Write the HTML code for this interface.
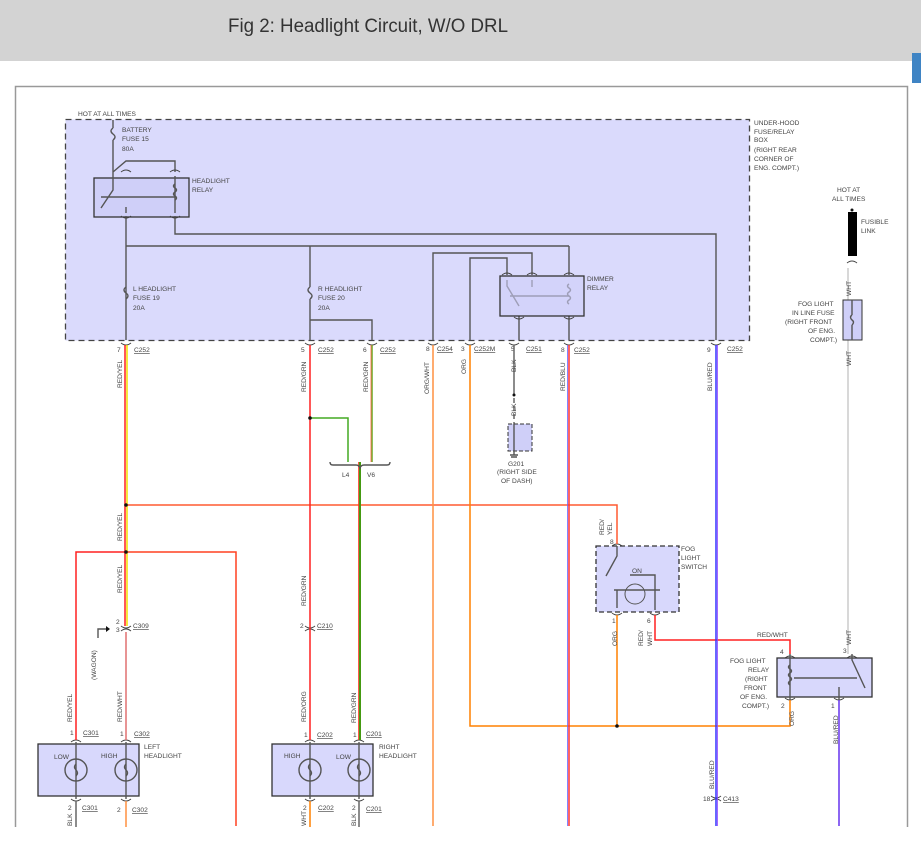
<!DOCTYPE html>
<html><head><meta charset="utf-8"><style>
html,body{margin:0;padding:0;background:#fff;width:921px;height:847px;overflow:hidden}
svg{display:block}
text{font-family:"Liberation Sans",sans-serif;font-size:6.6px;fill:#444}
.g{stroke:#555;stroke-width:1.4;fill:none}
.c{stroke:#444;stroke-width:1;fill:none}
.u{text-decoration:underline}
</style></head><body>
<svg width="921" height="847" viewBox="0 0 921 847" xmlns="http://www.w3.org/2000/svg">
<rect x="0" y="0" width="921" height="61" fill="#d3d3d3"/>
<text x="228" y="32" style="font-size:19px;fill:#333" textLength="280" lengthAdjust="spacingAndGlyphs">Fig 2: Headlight Circuit, W/O DRL</text>
<rect x="912" y="53" width="9" height="30" fill="#3f84c4"/>
<path d="M15.5 827 V86.5 H907.5 V827" stroke="#999" stroke-width="1.5" fill="none"/>
<rect x="65.5" y="119.5" width="684" height="221" fill="#dadafc" stroke="#444" stroke-width="1.3" stroke-dasharray="6,4"/>
<text x="78" y="116">HOT AT ALL TIMES</text>
<text x="754" y="125">UNDER-HOOD</text><text x="754" y="134">FUSE/RELAY</text><text x="754" y="142">BOX</text><text x="754" y="152">(RIGHT REAR</text><text x="754" y="161">CORNER OF</text><text x="754" y="170">ENG. COMPT.)</text>
<path class="g" d="M113 120 V128 M113 140 V172 M113 128 q-4 3 0 6 q4 3 0 6"/>
<text x="122" y="132">BATTERY</text><text x="122" y="141">FUSE 15</text><text x="122" y="151">80A</text>
<rect x="94" y="178" width="95" height="39" fill="#cfcff8" stroke="#333" stroke-width="1.3"/>
<path class="g" d="M113 172 L126 161 H175 V172 M113 172 V190 L101 208 M101 197 H175 M175 176 V213 M126 216 V340 M126 246 H569 M175 216 V234 H716 V340 M126 207 V213"/>
<path class="g" d="M175 184 q-3 2 0 4 q3 2 0 4 q-3 2 0 4 q3 2 0 4"/>
<text x="192" y="183">HEADLIGHT</text><text x="192" y="192">RELAY</text>
<path class="g" d="M126 287 q-4 3 0 6 q4 3 0 6"/>
<text x="133" y="291">L HEADLIGHT</text><text x="133" y="300">FUSE 19</text><text x="133" y="310">20A</text>
<path class="g" d="M310 246 V287 M310 299 V340 M310 287 q-4 3 0 6 q4 3 0 6 M310 320 H372 V340"/>
<text x="318" y="291">R HEADLIGHT</text><text x="318" y="300">FUSE 20</text><text x="318" y="310">20A</text>
<path class="g" d="M433 340 V253 H532 V275 M470 340 V258 H507 V275 M569 246 V275 M519 316 V340 M569 316 V340 M507 280 V286 L519 306 M532 280 V287 M510 296 H569"/>
<path class="g" d="M569 284 q-3 2 0 4 q3 2 0 4 q-3 2 0 4 q3 2 0 4 q-3 2 0 4"/>
<rect x="500" y="276" width="84" height="40" fill="#cfcff8" stroke="#333" stroke-width="1.3" fill-opacity="0.6"/>
<text x="587" y="281">DIMMER</text><text x="587" y="290">RELAY</text>
<!-- connector cups -->
<g class="c">
<path d="M121 343 q5 4 10 0 M305 343 q5 4 10 0 M367 343 q5 4 10 0 M428 343 q5 4 10 0 M465 343 q5 4 10 0 M509 343 q5 4 10 0 M564 343 q5 4 10 0 M711 343 q5 4 10 0"/>
<path d="M121 216 q5 4 10 0 M170 216 q5 4 10 0 M121 172 q5 -4 10 0 M170 172 q5 -4 10 0"/>
<path d="M502 275 q5 -4 10 0 M527 275 q5 -4 10 0 M564 275 q5 -4 10 0 M514 317 q5 4 10 0 M564 317 q5 4 10 0"/>
<path d="M121 626 q5 4 10 0 M121 631 q5 -4 10 0 M305 626 q5 4 10 0 M305 631 q5 -4 10 0 M711 796 q5 4 10 0 M711 801 q5 -4 10 0"/>
<path d="M71 742 q5 -4 10 0 M121 742 q5 -4 10 0 M305 742 q5 -4 10 0 M354 742 q5 -4 10 0"/>
<path d="M71 799 q5 4 10 0 M121 799 q5 4 10 0 M305 799 q5 4 10 0 M354 799 q5 4 10 0"/>
<path d="M612 546 q5 -4 10 0 M612 613 q5 4 10 0 M650 613 q5 4 10 0 M785 658 q5 -4 10 0 M847 658 q5 -4 10 0 M785 698 q5 4 10 0 M834 698 q5 4 10 0 M847 263 q5 -4 10 0"/>
</g>
<g>
<text x="117" y="352">7</text><text x="134" y="352" class="u">C252</text>
<text x="301" y="352">5</text><text x="318" y="352" class="u">C252</text>
<text x="363" y="352">6</text><text x="380" y="352" class="u">C252</text>
<text x="426" y="351">8</text><text x="437" y="351" class="u">C254</text>
<text x="461" y="351">3</text><text x="474" y="351" class="u">C252M</text>
<text x="511" y="351">5</text><text x="526" y="351" class="u">C251</text>
<text x="561" y="352">8</text><text x="574" y="352" class="u">C252</text>
<text x="707" y="352">9</text><text x="727" y="351" class="u">C252</text>
</g>
<g fill="none" stroke-width="1.5">
<path d="M125 345 V552" stroke="#ff2020"/><path d="M127 345 V626" stroke="#f0e000"/>
<path d="M125 552 V626" stroke="#ff2020"/>
<path d="M126 632 V740" stroke="#e07070"/>
<path d="M126 505 H617 V544" stroke="#ff5a30"/>
<path d="M126 552 H76 V740" stroke="#ff2020"/>
<path d="M126 552 H236 V826" stroke="#ff4020"/>
<path d="M310 345 V740" stroke="#ff2020"/>
<path d="M310 418 H348 V462" stroke="#44aa22"/>
<path d="M372 345 V462" stroke="#66aa22"/><path d="M371 345 V462" stroke="#ff6040" stroke-width="0.8"/>
<path d="M360 462 V740" stroke="#449911" stroke-width="2"/><path d="M358.5 462 V740" stroke="#ff3020" stroke-width="0.8"/>
<path d="M433 345 V826" stroke="#ff9040"/>
<path d="M470 345 V726 H790 V700" stroke="#ff8000"/>
<path d="M617 615 V726" stroke="#ff8000"/>
<path d="M655 615 V640 H790 V654" stroke="#ff2020"/>
<path d="M569 345 V826" stroke="#ff3030"/><path d="M567.5 345 V826" stroke="#6666ff" stroke-width="0.8"/>
<path d="M716 345 V826" stroke="#3333ff"/><path d="M717.5 345 V826" stroke="#9040ff" stroke-width="0.8"/>
<path d="M839 700 V826" stroke="#6633ee"/>
<path d="M848 268 V654" stroke="#cccccc"/>
<path d="M310 827 V801" stroke="#ff8000"/><path d="M126 801 V827" stroke="#ff9040"/>
<path d="M76 801 V827 M359 801 V827" stroke="#666"/>
<path d="M514 345 V395" stroke="#666"/><path d="M514 398 V424" stroke="#666" stroke-dasharray="5,3"/>
</g>
<g fill="#111"><circle cx="126" cy="505" r="1.8"/><circle cx="126" cy="552" r="1.8"/><circle cx="310" cy="418" r="1.8"/><circle cx="617" cy="726" r="1.8"/><circle cx="514" cy="395" r="1.5"/></g>
<g>
<text transform="translate(122,388) rotate(-90)">RED/YEL</text>
<text transform="translate(306,392) rotate(-90)">RED/GRN</text>
<text transform="translate(368,392) rotate(-90)">RED/GRN</text>
<text transform="translate(429,394) rotate(-90)">ORG/WHT</text>
<text transform="translate(466,374) rotate(-90)">ORG</text>
<text transform="translate(516,372) rotate(-90)">BLK</text>
<text transform="translate(516,416) rotate(-90)">BLK</text>
<text transform="translate(565,391) rotate(-90)">RED/BLU</text>
<text transform="translate(712,391) rotate(-90)">BLU/RED</text>
<text transform="translate(122,541) rotate(-90)">RED/YEL</text>
<text transform="translate(122,593) rotate(-90)">RED/YEL</text>
<text transform="translate(306,606) rotate(-90)">RED/GRN</text>
<text transform="translate(96,680) rotate(-90)">(WAGON)</text>
<text transform="translate(72,722) rotate(-90)">RED/YEL</text>
<text transform="translate(122,722) rotate(-90)">RED/WHT</text>
<text transform="translate(306,722) rotate(-90)">RED/ORG</text>
<text transform="translate(356,723) rotate(-90)">RED/GRN</text>
<text transform="translate(604,535) rotate(-90)">RED/</text><text transform="translate(612,535) rotate(-90)">YEL</text>
<text transform="translate(617,646) rotate(-90)">ORG</text>
<text transform="translate(643,646) rotate(-90)">RED/</text><text transform="translate(652,646) rotate(-90)">WHT</text>
<text transform="translate(851,296) rotate(-90)">WHT</text>
<text transform="translate(851,366) rotate(-90)">WHT</text>
<text transform="translate(851,645) rotate(-90)">WHT</text>
<text transform="translate(794,726) rotate(-90)">ORG</text>
<text transform="translate(838,744) rotate(-90)">BLU/RED</text>
<text transform="translate(714,789) rotate(-90)">BLU/RED</text>
<text transform="translate(72,826) rotate(-90)">BLK</text>
<text transform="translate(306,826) rotate(-90)">WHT</text>
<text transform="translate(356,826) rotate(-90)">BLK</text>
</g>
<path class="g" d="M330 462 q0 3 3 3 H356 q3 0 4 3 q1 -3 4 -3 H387 q3 0 3 -3" stroke-width="1"/>
<text x="342" y="477">L4</text><text x="367" y="477">V6</text>
<rect x="508" y="424" width="24" height="27" fill="#cfcff8" stroke="#333" stroke-dasharray="4,2"/>
<path class="g" d="M514 424 V455 M510 455 H518 M511 457 H517" stroke-width="1"/>
<text x="508" y="466">G201</text><text x="497" y="474">(RIGHT SIDE</text><text x="501" y="483">OF DASH)</text>
<text x="837" y="192">HOT AT</text><text x="832" y="201">ALL TIMES</text>
<circle cx="852" cy="210" r="1.5" fill="#111"/>
<rect x="848" y="212" width="9" height="44" fill="#000"/>
<text x="861" y="224">FUSIBLE</text><text x="861" y="233">LINK</text>
<rect x="843" y="300" width="19" height="40" fill="#cfcff8" stroke="#333"/>
<path class="g" d="M852 300 V315 M852 325 V340 M852 315 q-3 2 0 5 q3 2 0 5" stroke-width="1"/>
<text x="798" y="306">FOG LIGHT</text><text x="792" y="315">IN LINE FUSE</text><text x="785" y="324">(RIGHT FRONT</text><text x="808" y="333">OF ENG.</text><text x="810" y="342">COMPT.)</text>
<text x="116" y="624">2</text><text x="116" y="632">3</text><text x="133" y="628" class="u">C309</text>
<path class="g" d="M98 638 V629 H106" stroke-width="1"/><path d="M106 626 L110 629 L106 632Z" fill="#111"/>
<text x="300" y="628">2</text><text x="317" y="628" class="u">C210</text>
<text x="703" y="801">18</text><text x="723" y="801" class="u">C413</text>
<rect x="596" y="546" width="83" height="66" fill="#d8d8fc" stroke="#333" stroke-width="1.3" stroke-dasharray="5,3"/>
<path class="g" d="M617 546 V556 L606 576 M630 575 H655 V610 M617 590 V608 M614 590 H660" stroke-width="1"/>
<circle cx="635" cy="594" r="10" fill="none" stroke="#555"/>
<text x="632" y="573">ON</text>
<text x="681" y="551">FOG</text><text x="681" y="560">LIGHT</text><text x="681" y="569">SWITCH</text>
<text x="610" y="544">8</text><text x="612" y="623">1</text><text x="647" y="623">6</text>
<rect x="777" y="658" width="95" height="39" fill="#d8d8fc" stroke="#333" stroke-width="1.3"/>
<path class="g" d="M790 654 V700 M852 654 V660 L865 688 M794 678 H857 M839 687 V700" stroke-width="1"/>
<path class="g" d="M790 665 q-3 2 0 4 q3 2 0 4 q-3 2 0 4 q3 2 0 4 q-3 2 0 4" stroke-width="1"/>
<text x="757" y="637">RED/WHT</text>
<text x="780" y="654">4</text><text x="843" y="653">3</text><text x="781" y="708">2</text><text x="831" y="708">1</text>
<text x="730" y="663">FOG LIGHT</text><text x="748" y="672">RELAY</text><text x="745" y="681">(RIGHT</text><text x="744" y="690">FRONT</text><text x="740" y="699">OF ENG.</text><text x="742" y="708">COMPT.)</text>
<rect x="38" y="744" width="101" height="52" fill="#d8d8fc" stroke="#333" stroke-width="1.3"/>
<rect x="272" y="744" width="101" height="52" fill="#d8d8fc" stroke="#333" stroke-width="1.3"/>
<g class="g" stroke-width="1">
<path d="M76 742 V799 M126 742 V799 M310 742 V799 M359 742 V799"/>
<circle cx="76" cy="770" r="11"/><circle cx="126" cy="770" r="11"/><circle cx="310" cy="770" r="11"/><circle cx="359" cy="770" r="11"/>
<path d="M76 764 q-3 3 0 6 q3 3 0 6 M126 764 q-3 3 0 6 q3 3 0 6 M310 764 q-3 3 0 6 q3 3 0 6 M359 764 q-3 3 0 6 q3 3 0 6"/>
</g>
<text x="54" y="759">LOW</text><text x="101" y="758">HIGH</text><text x="284" y="758">HIGH</text><text x="336" y="759">LOW</text>
<text x="144" y="749">LEFT</text><text x="144" y="758">HEADLIGHT</text>
<text x="379" y="749">RIGHT</text><text x="379" y="758">HEADLIGHT</text>
<text x="70" y="735">1</text><text x="83" y="735" class="u">C301</text>
<text x="120" y="736">1</text><text x="134" y="736" class="u">C302</text>
<text x="304" y="737">1</text><text x="317" y="737" class="u">C202</text>
<text x="353" y="737">1</text><text x="366" y="736" class="u">C201</text>
<text x="68" y="810">2</text><text x="82" y="810" class="u">C301</text>
<text x="117" y="812">2</text><text x="132" y="812" class="u">C302</text>
<text x="303" y="810">2</text><text x="318" y="810" class="u">C202</text>
<text x="352" y="810">2</text><text x="366" y="811" class="u">C201</text>
</svg>
</body></html>
